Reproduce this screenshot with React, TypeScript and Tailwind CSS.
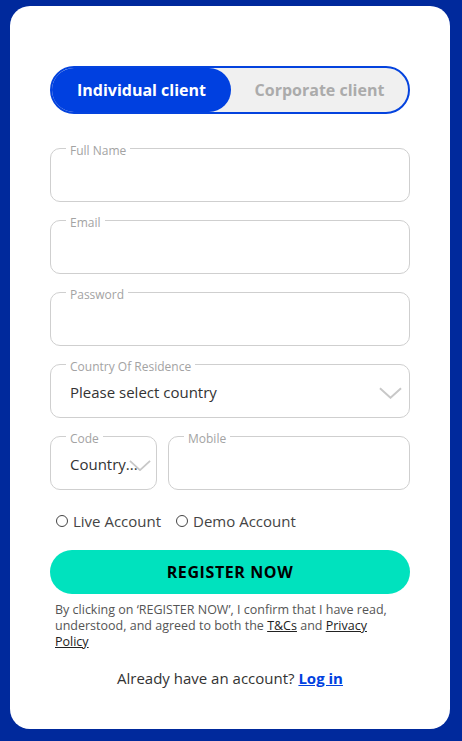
import { useState } from 'react';

const Chevron = ({ className }: { className?: string }) => (
    <svg viewBox="0 0 24 12" className={className} fill="none" stroke="#c8c8c8" strokeWidth="2">
        <path d="M1 1 L12 11 L23 1" />
    </svg>
);

const Field = ({ label, className, children }: { label: string; className?: string; children?: React.ReactNode }) => (
    <div className={`relative flex h-[54px] items-center rounded-[10px] border border-[#cfcfcf] pl-[19px] pt-[3px] ${className ?? ''}`}>
        <span className="absolute -top-[4px] left-[15px] bg-white px-[4px] text-[12px] leading-[12px] text-[#a3a3a3]">{label}</span>
        {children}
    </div>
);

const App = () => {
    const [tab, setTab] = useState('individual');
    const [account, setAccount] = useState('');

    return (
        <div className="min-h-screen bg-[#00299c] pt-[6px] pb-[12px]" style={{ fontFamily: '"Open Sans", Inter, sans-serif' }}>
            <div className="ml-[10px] h-[723px] w-[440px] rounded-[20px] bg-white px-[40px] pt-[60px]">
                {/* Client type toggle */}
                <div className="flex h-[48px] rounded-full border-2 border-[#0443de] bg-[#f0f0f0]">
                    <button
                        onClick={() => setTab('individual')}
                        className={`flex w-[179px] items-center justify-center rounded-full text-[16px] font-bold ${tab === 'individual' ? 'bg-[#0040e0] text-white' : 'text-[#ababab]'}`}
                    >
                        Individual client
                    </button>
                    <button
                        onClick={() => setTab('corporate')}
                        className={`flex flex-1 items-center justify-center rounded-full text-[16px] font-bold ${tab === 'corporate' ? 'bg-[#0040e0] text-white' : 'text-[#ababab]'}`}
                    >
                        Corporate client
                    </button>
                </div>

                <div className="mt-[34px] flex flex-col gap-[18px]">
                    <Field label="Full Name" />
                    <Field label="Email" />
                    <Field label="Password" />
                    <Field label="Country Of Residence" className="justify-between pr-[7px]">
                        <span className="text-[15px] text-[#333]">Please select country</span>
                        <Chevron className="mt-[1px] h-[12px] w-[23px]" />
                    </Field>
                    <div className="flex gap-[11px]">
                        <Field label="Code" className="w-[107px] shrink-0">
                            <span className="text-[15px] text-[#333]">Country...</span>
                            <Chevron className="ml-[-9px] mt-[1px] h-[11px] w-[22px]" />
                        </Field>
                        <Field label="Mobile" className="flex-1" />
                    </div>
                </div>

                <div className="mt-[21px] flex items-center gap-[15px] pl-[6px] text-[15px] leading-[20px] text-[#444]">
                    <label className="flex items-center gap-[5px]" onClick={() => setAccount('live')}>
                        <span className={`h-[12px] w-[12px] rounded-full border border-[#444] ${account === 'live' ? 'bg-[#0040e0]' : ''}`} />
                        Live Account
                    </label>
                    <label className="flex items-center gap-[5px]" onClick={() => setAccount('demo')}>
                        <span className={`h-[12px] w-[12px] rounded-full border border-[#444] ${account === 'demo' ? 'bg-[#0040e0]' : ''}`} />
                        Demo Account
                    </label>
                </div>

                <button className="mt-[19px] h-[44px] w-full rounded-full bg-[#00e2be] text-[16px] font-bold tracking-[0.6px] text-black">
                    REGISTER NOW
                </button>

                <p className="mt-[8px] pl-[5px] pr-[12px] text-[12.5px] leading-[16px] text-[#555]">
                    By clicking on ‘REGISTER NOW’, I confirm that I have read, understood, and agreed to both the{' '}
                    <a className="text-[#222] underline">T&amp;Cs</a> and <a className="text-[#222] underline">Privacy Policy</a>
                </p>

                <p className="mt-[18px] text-center text-[15px] leading-[20px] text-[#333]">
                    Already have an account? <a className="font-bold text-[#0040e0] underline">Log in</a>
                </p>
            </div>
        </div>
    );
};

export default App;
